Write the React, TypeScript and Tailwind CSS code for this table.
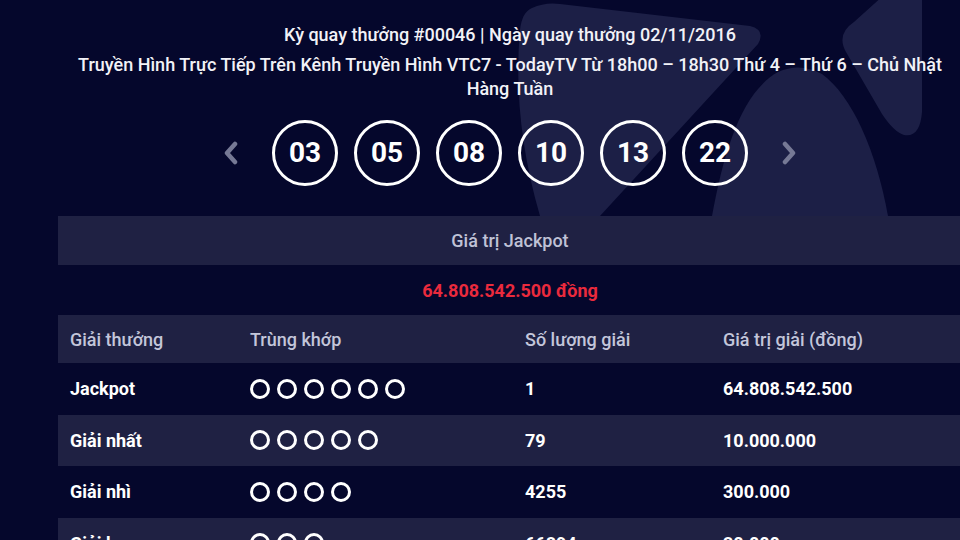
import React from "react";

const numbers = ["03", "05", "08", "10", "13", "22"];

const prizes = [
  { name: "Jackpot", match: 6, count: "1", value: "64.808.542.500" },
  { name: "Giải nhất", match: 5, count: "79", value: "10.000.000" },
  { name: "Giải nhì", match: 4, count: "4255", value: "300.000" },
  { name: "Giải ba", match: 3, count: "66894", value: "30.000" },
];

const Chevron = ({ dir }: { dir: "left" | "right" }) => (
  <svg width="18" height="24" viewBox="0 0 18 24" className="shrink-0">
    <path
      d={dir === "left" ? "M13 3 L5 12 L13 21" : "M5 3 L13 12 L5 21"}
      fill="none"
      stroke="#767995"
      strokeWidth="4.5"
      strokeLinecap="round"
      strokeLinejoin="round"
    />
  </svg>
);

export default function App() {
  return (
    <div className="w-[960px] h-[540px] overflow-hidden bg-[#05072c] text-white font-['Roboto',sans-serif]">
      {/* header with faint background logo */}
      <div className="relative h-[216px]">
        <svg
          className="absolute left-0 top-0"
          width="960"
          height="216"
          viewBox="0 0 960 216"
        >
          <path
            d="M532 8 Q545 2 560 4 L750 26 Q766 30 758 44 L600 216 L540 216 Q512 120 520 30 Q522 12 532 8 Z"
            fill="#1c1f46"
          />
          <path
            d="M712 216 C724 150 742 92 778 72 Q800 62 822 74 C852 96 876 150 888 216 Z"
            fill="#1c1f46"
          />
          <path
            d="M884 -5 L922 -5 L922 112 Q920 138 904 135 Q894 132 882 114 L846 52 Q836 34 854 22 Z"
            fill="#1c1f46"
          />
        </svg>

        <div className="relative ml-[58px] w-[904px] pt-[22px] text-center">
          <p className="text-[18px] font-medium leading-[25px] text-[#f2f2f7]">
            Kỳ quay thưởng #00046 | Ngày quay thưởng 02/11/2016
          </p>
          <p className="mt-[6px] px-[10px] text-[18px] font-medium leading-[24px] text-[#f2f2f7]">
            Truyền Hình Trực Tiếp Trên Kênh Truyền Hình VTC7 - TodayTV Từ 18h00 – 18h30 Thứ 4 – Thứ 6 – Chủ Nhật Hàng Tuần
          </p>

          <div className="mt-[19px] flex items-center justify-center gap-[16px]">
            <div className="mr-[16px]">
              <Chevron dir="left" />
            </div>
            {numbers.map((n) => (
              <div
                key={n}
                className="flex h-[66px] w-[66px] items-center justify-center rounded-full border-[3px] border-white text-[28px] font-bold"
              >
                {n}
              </div>
            ))}
            <div className="ml-[16px]">
              <Chevron dir="right" />
            </div>
          </div>
        </div>
      </div>

      {/* jackpot and prize table */}
      <div className="ml-[58px] w-[904px]">
        <div className="flex h-[49px] items-center justify-center bg-[#1f2143] text-[18px] font-medium text-[#bfc2d6]">
          Giá trị Jackpot
        </div>
        <div className="flex h-[50px] items-center justify-center text-[18px] font-bold text-[#ea2a3d]">
          64.808.542.500 đồng
        </div>
        <div className="flex h-[48px] items-center bg-[#1f2143] text-[18px] font-medium text-[#c3c6da]">
          <div className="w-[192px] pl-[12px]">Giải thưởng</div>
          <div className="w-[275px]">Trùng khớp</div>
          <div className="w-[198px]">Số lượng giải</div>
          <div>Giá trị giải (đồng)</div>
        </div>
        {prizes.map((p, i) => (
          <div
            key={p.name}
            className={`flex h-[51.5px] items-center text-[18px] font-bold ${
              i % 2 === 1 ? "bg-[#1f2143]" : ""
            }`}
          >
            <div className="w-[192px] pl-[12px]">{p.name}</div>
            <div className="flex w-[275px] gap-[7px]">
              {Array.from({ length: p.match }).map((_, k) => (
                <span
                  key={k}
                  className="h-[20px] w-[20px] rounded-full border-[3px] border-white"
                />
              ))}
            </div>
            <div className="w-[198px]">{p.count}</div>
            <div>{p.value}</div>
          </div>
        ))}
      </div>
    </div>
  );
}
